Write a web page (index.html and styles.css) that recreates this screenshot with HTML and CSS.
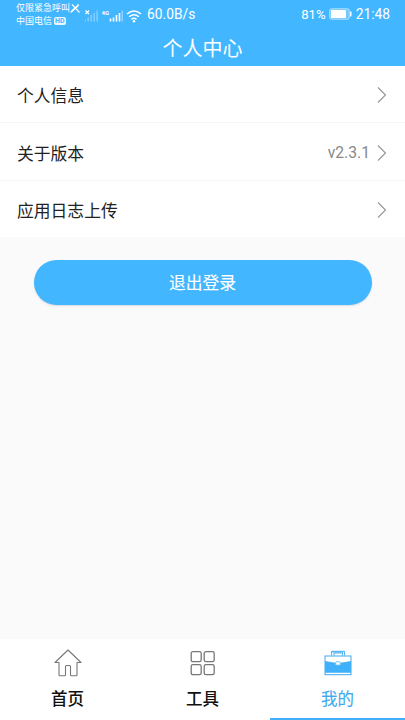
FILE: index.html
```html
<!DOCTYPE html>
<html lang="zh-CN">
<head>
<meta charset="utf-8">
<title>个人中心</title>
<link rel="stylesheet" href="styles.css">
</head>
<body>
<header>
  <div class="status">
    <div class="carrier">
      <div class="line">仅限紧急呼叫<svg class="nocall" width="11" height="11" viewBox="0 0 11 11"><path d="M2 1.500 9.500 9.500" stroke="#fff" stroke-width="1.100"/><path d="M1 9.500C2 6.500 6.500 5.500 8.500 1.500" fill="none" stroke="#fff" stroke-width="1.700"/></svg></div>
      <div class="line">中国电信<span class="hd">HD</span></div>
    </div>
    <svg class="signals" width="57" height="18" viewBox="0 0 57 18">
      <path d="M.5 4.500 4 8M4 4.500.5 8" stroke="#fff" stroke-width="1.200"/>
      <path d="M1.200 15v2M4.200 13v4M7.200 10.500v6.500M10.200 8.500v8.500M13.200 6v11" transform="translate(-1 -1.500)" stroke="#fff" stroke-opacity=".35" stroke-width="1.500"/>
      <text x="16.500" y="9" class="net">4G</text>
      <path d="M25.500 14v3M28.500 13v4M31.500 10.500v6.500M34.500 8.500v8.500" transform="translate(0 -1.500)" stroke="#fff" stroke-width="1.600"/>
      <path d="M37.300 4.500v11" stroke="#fff" stroke-opacity=".4" stroke-width="1.500"/>
      <g fill="none" stroke="#fff" stroke-width="1.500"><path d="M42 8Q49 2 56 8M44.200 10.800Q49 6.600 53.800 10.800M46.500 13.300Q49 11.300 51.500 13.300"/></g>
      <circle cx="49" cy="15.300" r="1.200" fill="#fff"/>
    </svg>
    <span class="speed">60.0B/s</span>
    <span class="percent">81%</span>
    <svg class="battery" width="23" height="12" viewBox="0 0 23 12"><rect x=".7" y=".7" width="19.600" height="10.600" rx="2" fill="#fff" fill-opacity=".25" stroke="#fff" stroke-opacity=".5" stroke-width="1"/><rect x="2" y="2" width="15" height="8" rx=".8" fill="#fff"/><path d="M21.800 3.500v5" stroke="#fff" stroke-width="1.400"/></svg>
    <span class="clock">21:48</span>
  </div>
  <h1>个人中心</h1>
</header>
<main>
  <div class="list">
    <div class="row"><span>个人信息</span><svg class="arrow" viewBox="0 0 10 18"><path d="m1 1.500 7.500 7.500L1 16.500"/></svg></div>
    <div class="row"><span>关于版本</span><span class="version">v2.3.1</span><svg class="arrow" viewBox="0 0 10 18"><path d="m1 1.500 7.500 7.500L1 16.500"/></svg></div>
    <div class="row"><span>应用日志上传</span><svg class="arrow" viewBox="0 0 10 18"><path d="m1 1.500 7.500 7.500L1 16.500"/></svg></div>
  </div>
  <button class="logout">退出登录</button>
</main>
<nav>
  <div class="tab">
    <svg width="28" height="28" viewBox="0 0 28 28"><path d="M14 1 1 13.500h4v12.200q0 1 1 1h4.500q1 0 1-1v-8.200q0-1 1-1h3q1 0 1 1v8.200q0 1 1 1H22q1 0 1-1V13.500h4z" fill="none" stroke="#777" stroke-width="1.100" stroke-linejoin="round"/></svg>
    <span>首页</span>
  </div>
  <div class="tab">
    <svg width="28" height="28" viewBox="0 0 28 28"><g fill="none" stroke="#777" stroke-width="1.300"><rect x="2.200" y="2.700" width="10" height="10" rx="1.800"/><rect x="15.200" y="2.700" width="10" height="10" rx="1.800"/><rect x="2.200" y="15.700" width="10" height="10" rx="1.800"/><rect x="15.200" y="15.700" width="10" height="10" rx="1.800"/></g></svg>
    <span>工具</span>
  </div>
  <div class="tab active">
    <svg width="28" height="28" viewBox="0 0 28 28"><g fill="none" stroke="#3fa9ef"><path d="M7.500 6.500V2.300h13v4.200M10 6.500V4h8.500v2.500" stroke-width=".9"/><path d="M8.500 3h11" stroke-width="1.500" stroke-dasharray="1.200 .7"/><rect x="1" y="7" width="26" height="18.700" stroke-width="1"/></g><path d="M1 12.500 11.500 14.200v1.800h5v-1.800L27 12.500v11.200H1z" fill="#3fb1fa"/><path d="M1 12.500 11.500 14.200M27 12.500 16.500 14.200" stroke="#3fa9ef" stroke-width=".8"/><rect x="11.700" y="12.700" width="4.600" height="3.500" rx="1" fill="#fff" stroke="#3fa9ef" stroke-width=".7"/></svg>
    <span>我的</span>
  </div>
</nav>
</body>
</html>
```
FILE: styles.css
```css
* { box-sizing: border-box; }
body {
  margin: 0;
  height: 720px;
  display: flex;
  flex-direction: column;
  overflow: hidden;
  background: #fafafa;
  font-family: Roboto, "Noto Sans CJK SC", sans-serif;
  color: #222;
}
header { height: 66px; background: #42b6ff; color: #fff; }
.status { height: 28px; display: flex; align-items: center; padding: 0 15px 0 16px; }
.carrier { width: 69px; padding-top: 1px; font-size: 9px; line-height: 13px; }
.line { height: 13px; display: flex; align-items: center; white-space: nowrap; }
.nocall { flex: none; }
.hd { margin-left: 2px; padding: 0 1px; border-radius: 2px; background: #e9f7ff; color: #42b6ff; font-size: 7px; font-weight: 700; line-height: 8px; }
.signals { flex: none; margin-top: 2px; }
.net { font: 700 6px Roboto, sans-serif; fill: #fff; }
.speed, .percent, .clock { font-size: 13.8px; line-height: 28px; }
.speed { margin-left: 5px; }
.percent { margin-left: auto; padding-top: 1px; font-size: 13.2px; }
.battery { margin: 0 4px 0 3px; }
h1 { margin: 0; height: 38px; padding-top: 1px; font-size: 20px; font-weight: 400; line-height: 40px; text-align: center; }
main { flex: 1; }
.list { background: #fff; }
.row { height: 57.300px; display: flex; align-items: center; padding: 2px 18px 0 17px; border-bottom: 1px solid #f6f6f6; font-size: 16.800px; }
.row:nth-child(2) { padding-top: 3px; }
.row:last-child { height: 56.400px; border-bottom: 0; }
.version { margin-left: auto; color: #888; font-size: 15.700px; }
.arrow { width: 10px; height: 18px; margin-left: auto; fill: none; stroke: #999; stroke-width: 1.2; }
.version + .arrow { margin-left: 7px; }
.logout { display: block; width: 338px; height: 45px; margin: 23px auto 0; padding: 2px 0 0; border: 0; border-radius: 23px; background: #42b6ff; box-shadow: 0 1px 2px #0002; color: #fff; font: 400 16.800px/43px Roboto, "Noto Sans CJK SC", sans-serif; -webkit-text-stroke: .1px; }
nav { height: 81px; display: flex; background: #fff; }
.tab { flex: 1; display: flex; flex-direction: column; align-items: center; padding-top: 10px; border-bottom: 2.500px solid transparent; color: #111; font-size: 16.500px; font-weight: 500; line-height: 24px; }
.tab svg { flex: none; }
.tab span { height: 24px; margin-top: 11px; }
.active { border-color: #42b0f8; color: #3fa9ef; font-weight: 400; -webkit-text-stroke: .1px; }
```
